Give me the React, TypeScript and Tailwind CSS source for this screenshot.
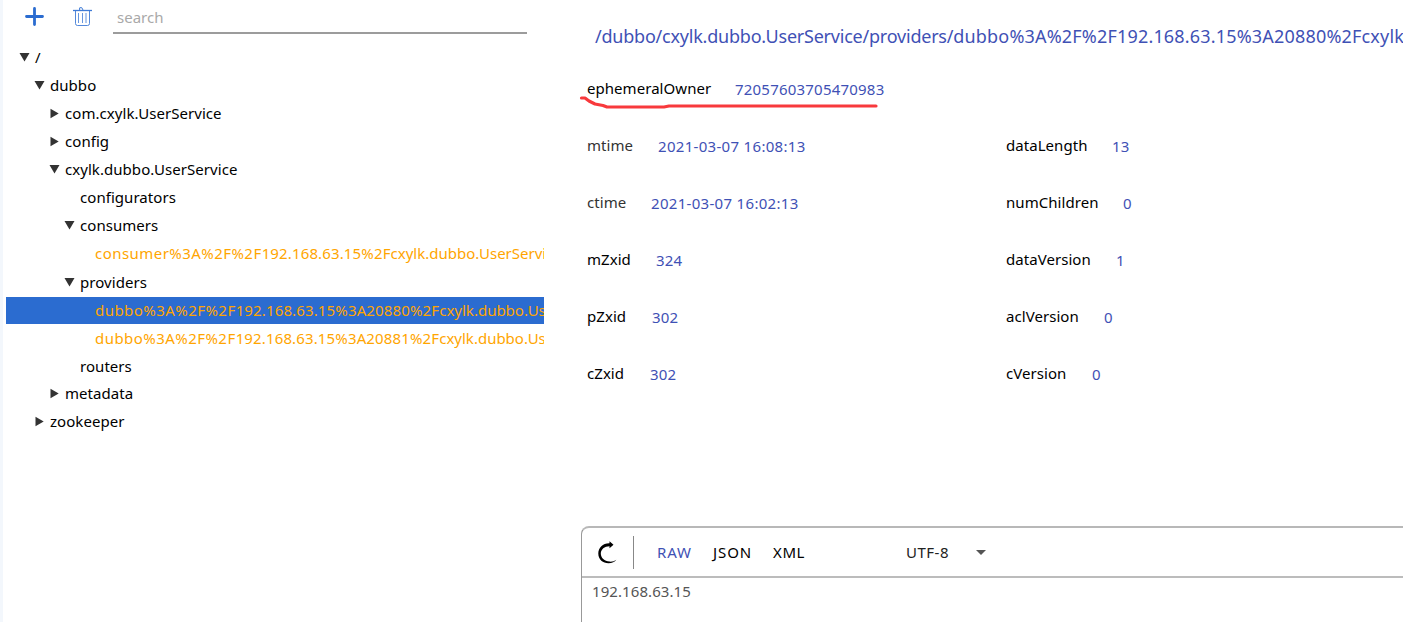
type Node = { label: string; parts?: [string, string, string]; box: string; state: "open" | "closed" | "leaf"; selected?: boolean };

const nodes: Node[] = [
  { label: "/", box: "h-7 pl-[13px]", state: "open" },
  { label: "dubbo", box: "h-7 pl-[28px]", state: "open" },
  { label: "com.cxylk.UserService", box: "h-7 pl-[43px]", state: "closed" },
  { label: "config", box: "h-7 pl-[43px]", state: "closed" },
  { label: "cxylk.dubbo.UserService", box: "h-7 pl-[43px]", state: "open" },
  { label: "configurators", box: "h-7 pl-[58px]", state: "leaf" },
  { label: "consumers", box: "h-7 pl-[58px]", state: "open" },
  { label: "consumer", parts: ["consumer%3A%2F%2F", "192.168.63.15%2F", "cxylk.dubbo.UserService"], box: "h-7 pl-[73px]", state: "leaf" },
  { label: "providers", box: "mt-px h-7 pl-[58px]", state: "open" },
  { label: "provider-20880", parts: ["dubbo%3A%2F%2F", "192.168.63.15%3A20880%2F", "cxylk.dubbo.UserService"], box: "mt-px h-[27px] pb-px pl-[73px]", state: "leaf", selected: true },
  { label: "provider-20881", parts: ["dubbo%3A%2F%2F", "192.168.63.15%3A20881%2F", "cxylk.dubbo.UserService"], box: "h-7 pl-[73px]", state: "leaf" },
  { label: "routers", box: "h-7 pl-[58px]", state: "leaf" },
  { label: "metadata", box: "-mt-px h-7 pl-[43px]", state: "closed" },
  { label: "zookeeper", box: "h-7 pl-[28px]", state: "closed" },
];

type Stat = { name: string; value: string; width: string; soft?: boolean; tracking?: string };

const left: Stat[] = [
  { name: "ephemeralOwner", value: "72057603705470983", width: "w-[148px]", tracking: "tracking-[0.21px]" },
  { name: "mtime", value: "2021-03-07 16:08:13", width: "w-[71px]", soft: true, tracking: "tracking-[0.31px]" },
  { name: "ctime", value: "2021-03-07 16:02:13", width: "w-[64px]", soft: true, tracking: "tracking-[0.31px]" },
  { name: "mZxid", value: "324", width: "w-[69px]" },
  { name: "pZxid", value: "302", width: "w-[65px]" },
  { name: "cZxid", value: "302", width: "w-[63px]" },
];

const right: Stat[] = [
  { name: "dataLength", value: "13", width: "w-[106px]" },
  { name: "numChildren", value: "0", width: "w-[117px]" },
  { name: "dataVersion", value: "1", width: "w-[110px]" },
  { name: "aclVersion", value: "0", width: "w-[98px]" },
  { name: "cVersion", value: "0", width: "w-[86px]" },
];

function Arrow({ state }: { state: Node["state"] }) {
  return (
    <svg className="h-[11px] w-[11px] shrink-0" viewBox="0 0 11 11" fill="#333">
      {state === "open" && <path d="M0.5 1H10.5L5.5 9.5Z" />}
      {state === "closed" && <path d="M1.5 0.8V10.2L9.7 5.5Z" />}
    </svg>
  );
}

function TreeRow({ node }: { node: Node }) {
  return (
    <div className={`flex items-center whitespace-nowrap ${node.box} ${node.selected ? "bg-[#2b6cd0]" : ""}`}>
      <Arrow state={node.state} />
      {node.parts ? (
        <span className="ml-[5px] text-[#ffa500]">
          <span className="tracking-[0.45px]">{node.parts[0]}</span>
          <span className="tracking-[0.14px]">{node.parts[1]}</span>
          <span>{node.parts[2]}</span>
        </span>
      ) : (
        <span className="ml-[5px] tracking-[0.05px]">{node.label}</span>
      )}
    </div>
  );
}

function StatRow({ stat }: { stat: Stat }) {
  return (
    <div className="flex h-[57px] items-center">
      <span className={`${stat.width} shrink-0 tracking-[0.05px] ${stat.soft ? "text-[#333]" : "text-black"}`}>{stat.name}</span>
      <span className={`pt-px text-[#3f51b5] ${stat.tracking ?? "tracking-[0.2px]"}`}>{stat.value}</span>
    </div>
  );
}

export default function App() {
  return (
    <div className="flex h-[622px] w-full overflow-hidden bg-white font-['Noto_Sans',sans-serif] text-[15px] text-black">
      <div className="w-[3px] shrink-0 bg-[#f3f7fc]" />
      <aside className="w-[541px] shrink-0 overflow-hidden pl-[3px]">
        <div className="flex h-[34px]">
          <svg className="mt-[7px] ml-[19px] h-[19px] w-[19px]" viewBox="0 0 19 19" stroke="#2b6cd0" strokeWidth="2.8" strokeLinecap="round">
            <path d="M9.5 1.5V17.5M1.5 9.5H17.5" />
          </svg>
          <svg className="mt-[7px] ml-[29px] h-[20px] w-[19px]" viewBox="0 0 19 20" fill="none" stroke="#3f7bd6">
            <path d="M0 3.5H19" strokeWidth="1.3" />
            <path d="M6.6 3V1Q6.6 .7 7 .7H8.8L10 3" />
            <path d="M2.5 3.5V16.5Q2.5 18.5 4.5 18.5H14.5Q16.5 18.5 16.5 16.5V3.5" strokeWidth="0.9" />
            <path d="M5.5 6V16M9.5 6V16M13 6V16" strokeWidth="0.8" />
          </svg>
          <div className="ml-[21px] w-[414px] border-b-2 border-[#9c9c9c] pt-[6px] pl-1 text-[#a9a9a9]">search</div>
        </div>
        <div className="pt-[9px]">
          {nodes.map((n) => (
            <TreeRow key={n.label} node={n} />
          ))}
        </div>
      </aside>
      <main className="flex min-w-0 flex-1 flex-col pl-[37px]">
        <h1 className="h-[60px] pt-[22px] pl-[14px] text-[18px] leading-7 whitespace-nowrap text-[#3f51b5]">
          <span className="tracking-[-0.22px]">/dubbo/cxylk.dubbo.UserService/providers/</span>
          <span className="tracking-[0.18px]">dubbo%3A%2F%2F192.168.63.15%3A20880%2Fcxylk.dubbo.UserService</span>
        </h1>
        <div className="relative flex h-[466px] pl-[6px]">
          <div className="w-[419px]">{left.map((s) => <StatRow key={s.name} stat={s} />)}</div>
          <div className="pt-[57px]">{right.map((s) => <StatRow key={s.name} stat={s} />)}</div>
          <svg className="absolute top-[34px] left-[-3px] h-[16px] w-[302px]" viewBox="0 0 302 16" fill="none" stroke="#f8393c" strokeWidth="3.2" strokeLinecap="round" strokeLinejoin="round">
            <path d="M3.5 4H7L11 7L17 10L25 11.5L29 13H86L91 12H298" />
          </svg>
        </div>
        <section className="flex-1 rounded-tl-lg border-t-2 border-l border-t-[#b8b8b8] border-l-[#999]">
          <div className="flex h-[50px] items-center border-b-2 border-[#bcbcbc]">
            <svg className="mt-px ml-[16px] h-[23px] w-[20px]" viewBox="0 0 20 23">
              <path d="M11.5 2.2C5 2 0.3 6.5 0.3 12.5C0.3 18.5 5 22.3 10.5 22.3C14 22.3 16.8 21 18.3 18.8C16.5 20.2 14 20.8 11.5 20.6C6.5 20.2 2.8 17 2.8 12.5C2.8 8.500 6.5 5.3 11.5 5.3V7.3L15.5 3.7L11.5 .3Z" />
            </svg>
            <div className="ml-[15px] h-[33px] w-px bg-[#888]" />
            <div className="flex items-center text-[15px]">
              <span className="ml-[23px] w-[56px] tracking-[0.9px] text-[#3f51b5]">RAW</span>
              <span className="w-[60px] tracking-[0.9px]">JSON</span>
              <span className="w-[133px] tracking-[0.6px]">XML</span>
              <span className="w-[70px] tracking-[0.5px] text-[#222]">UTF-8</span>
              <svg className="h-[5px] w-[10px]" viewBox="0 0 10 5" fill="#555"><path d="M0 0H10L5 5Z" /></svg>
            </div>
          </div>
          <div className="pt-[2px] pl-[10px] tracking-[0.08px] text-[#555]">192.168.63.15</div>
        </section>
      </main>
    </div>
  );
}
